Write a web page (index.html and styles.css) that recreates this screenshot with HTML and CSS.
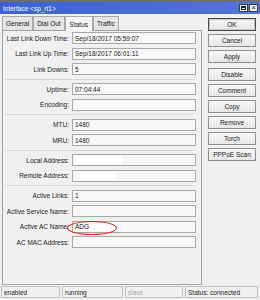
FILE: index.html
```html
<!DOCTYPE html>
<html>
    <head>
        <meta charset="UTF-8">
        <title>Interface</title>
        <link rel="stylesheet" href="styles.css">
    </head>
    <body>
        <div class="topstrip"></div>
        <!-- window title -->
        <div class="titlebar">
            <span>Interface &lt;sp_rt1&gt;</span>
            <div class="ctrls">
                <span class="ctl"><span class="maxbox"></span></span>
                <span class="ctl">×</span>
            </div>
        </div>
        <div class="main">
            <div class="left">
                <div class="tabs">
                    <div class="tab">General</div>
                    <div class="tab">Dial Out</div>
                    <div class="tab active">Status</div>
                    <div class="tab">Traffic</div>
                </div>
                <div class="panel">
                    <div class="row"><div class="label">Last Link Down Time:</div><div class="field">Sep/18/2017 05:59:07</div></div>
                    <div class="row"><div class="label">Last Link Up Time:</div><div class="field">Sep/18/2017 06:01:11</div></div>
                    <div class="row"><div class="label">Link Downs:</div><div class="field">5</div></div>
                    <div class="sep"></div>
                    <div class="row"><div class="label">Uptime:</div><div class="field">07:04:44</div></div>
                    <div class="row"><div class="label">Encoding:</div><div class="field"></div></div>
                    <div class="sep"></div>
                    <div class="row"><div class="label">MTU:</div><div class="field">1480</div></div>
                    <div class="row"><div class="label">MRU:</div><div class="field">1480</div></div>
                    <div class="sep"></div>
                    <div class="row"><div class="label">Local Address:</div><div class="field"><span class="blank local"></span></div></div>
                    <div class="row"><div class="label">Remote Address:</div><div class="field"><span class="blank remote"></span></div></div>
                    <div class="sep"></div>
                    <div class="row"><div class="label">Active Links:</div><div class="field">1</div></div>
                    <div class="row"><div class="label">Active Service Name:</div><div class="field"></div></div>
                    <div class="row"><div class="label">Active AC Name:</div><div class="field">ADG<span class="blank acname"></span></div></div>
                    <div class="row"><div class="label">AC MAC Address:</div><div class="field"></div></div>
                </div>
            </div>
            <div class="buttons">
                <div class="btn default">OK</div>
                <div class="btn">Cancel</div>
                <div class="btn">Apply</div>
                <div class="btn spaced">Disable</div>
                <div class="btn">Comment</div>
                <div class="btn">Copy</div>
                <div class="btn">Remove</div>
                <div class="btn">Torch</div>
                <div class="btn">PPPoE Scan</div>
            </div>
        </div>
        <div class="statusbar">
            <div class="sbox s-enabled">enabled</div>
            <div class="sbox s-running">running</div>
            <div class="sbox s-slave grey">slave</div>
            <div class="sbox s-status">Status: connected</div>
        </div>
        <!-- red marker drawn over the AC name -->
        <div class="marker"></div>
    </body>
</html>
```

FILE: styles.css
```css
*{
    margin: 0;
    padding: 0;
    box-sizing: border-box;
}
body{
    width: 260px;
    height: 300px;
    background-color: #f0f0f0;
    font-family: "Liberation Sans", Arial, sans-serif;
    font-size: 6.5px;
    color: #1a1a1a;
    position: relative;
    overflow: hidden;
}
.topstrip{
    height: 2px;
    background-color: #6f6f6f;
}
.titlebar{
    height: 12px;
    background: linear-gradient(to right, #3d61d5, #5573da);
    color: #fff;
    display: flex;
    align-items: center;
    justify-content: space-between;
    padding: 0 2px 0 3px;
}
.ctrls{
    display: flex;
    gap: 1px;
}
.ctl{
    width: 9px;
    height: 8px;
    background-color: #ececec;
    border: 1px solid #3a3a3a;
    color: #222;
    font-size: 8px;
    line-height: 6px;
    display: flex;
    align-items: center;
    justify-content: center;
}
.maxbox{
    width: 5px;
    height: 4px;
    border: 1px solid #222;
    border-top-width: 2px;
}
.main{
    height: 271px;
    display: flex;
    gap: 6px;
    padding: 0 4px 0 2px;
}
.left{
    width: 200px;
    display: flex;
    flex-direction: column;
}
.tabs{
    height: 16px;
    display: flex;
    align-items: flex-end;
}
.tab{
    height: 14px;
    padding: 0 3px;
    border: 1px solid #a9a9a9;
    border-bottom: none;
    background-color: #e5e5e5;
    display: flex;
    align-items: center;
}
.tab.active{
    height: 15px;
    background-color: #f6f6f6;
    margin-bottom: -1px;
    position: relative;
    padding: 0 4px;
}
.panel{
    flex: 1;
    border: 1px solid #a3a3a3;
    padding: 1px 5px 0 0;
    display: flex;
    flex-direction: column;
    gap: 3.5px;
}
.row{
    height: 12px;
    display: flex;
    align-items: center;
    gap: 3px;
}
.label{
    width: 66px;
    text-align: right;
    white-space: nowrap;
}
.field{
    width: 124px;
    height: 12px;
    border: 1px solid #a8a8a8;
    background-color: #f7f7f7;
    padding-left: 2px;
    display: flex;
    align-items: center;
}
.blank{
    height: 8px;
    background-color: #fff;
}
.blank.local{
    width: 47px;
}
.blank.remote{
    width: 36px;
    margin-left: 6px;
}
.blank.acname{
    width: 30px;
    margin-left: 1px;
}
.sep{
    height: 1px;
    margin: 0 2px;
    background-color: #d6d6d6;
}
.buttons{
    width: 48px;
    padding-top: 4px;
    display: flex;
    flex-direction: column;
    gap: 3px;
}
.btn{
    height: 13px;
    border: 1px solid #8e8e8e;
    background: linear-gradient(#f7f7f7, #e6e6e6);
    display: flex;
    align-items: center;
    justify-content: center;
}
.btn.default{
    border-color: #4a4a4a;
    box-shadow: inset 0 0 0 1px #c8c8c8;
}
.btn.spaced{
    margin-top: 2px;
}
.statusbar{
    height: 15px;
    display: flex;
    gap: 2px;
    padding: 1px 2px 2px 1px;
}
.sbox{
    border: 1px solid #c2c2c2;
    padding-left: 2px;
    display: flex;
    align-items: center;
}
.s-enabled{
    width: 59px;
}
.s-running{
    width: 61px;
}
.s-slave{
    width: 58px;
}
.s-status{
    width: 73px;
}
.grey{
    color: #a8a8a8;
}
.marker{
    position: absolute;
    left: 67px;
    top: 221px;
    width: 50px;
    height: 14px;
    border: 1.5px solid #e3211d;
    border-radius: 50%;
}
```
